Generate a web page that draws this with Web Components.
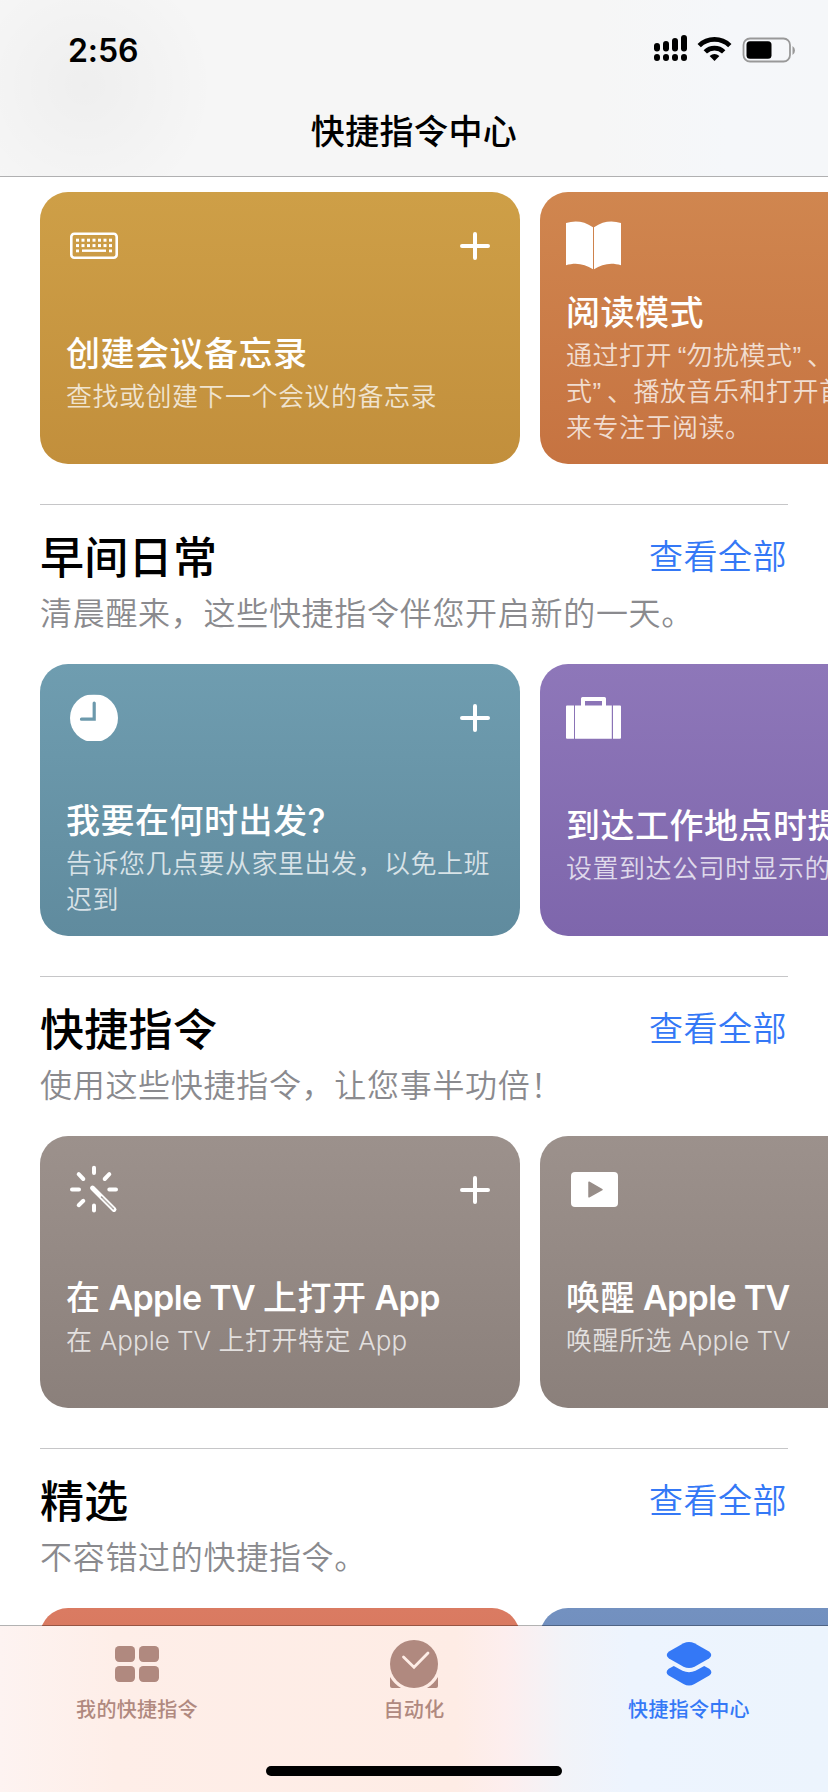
<!DOCTYPE html>
<html lang="zh-CN">
<head>
<meta charset="utf-8">
<title>快捷指令中心</title>
<style>
  html, body { margin: 0; height: 100%; }
  body { background: #fff; font-family: Inter, "Noto Sans CJK SC", sans-serif; overflow: hidden; }
  .lt { letter-spacing: -.65px; font-weight: 600; }
  .ld { letter-spacing: 0; }
  .q { display: inline-block; width: 14.5px; line-height: 1; letter-spacing: 0; font-family: "Liberation Sans", sans-serif; }
  .open { text-align: right; }
</style>
</head>
<body>
<shortcuts-app>
  <nav-header slot="header" time="2:56">快捷指令中心</nav-header>

  <card-strip>
    <shortcut-card icon="keyboard" add style="--from:#ce9f47;--to:#c28f3c;--bottom:49px">
      创建会议备忘录<span slot="desc">查找或创建下一个会议的备忘录</span>
    </shortcut-card>
    <shortcut-card icon="book" style="--from:#d0864f;--to:#c67341">
      阅读模式<span slot="desc">通过打开<span class="q open">“</span>勿扰模式<span class="q">”</span>、<br>式<span class="q">”</span>、播放音乐和打开首<br>来专注于阅读。</span>
    </shortcut-card>
  </card-strip>

  <gallery-section heading="早间日常" sub="清晨醒来，这些快捷指令伴您开启新的一天。">
    <shortcut-card icon="clock" add style="--from:#6f9db0;--to:#608b9e">
      我要在何时出发?<span slot="desc">告诉您几点要从家里出发，以免上班<br>迟到</span>
    </shortcut-card>
    <shortcut-card icon="suitcase" style="--from:#8e77b9;--to:#7e66ac;--bottom:49px">
      到达工作地点时提<span slot="desc">设置到达公司时显示的</span>
    </shortcut-card>
  </gallery-section>

  <gallery-section heading="快捷指令" sub="使用这些快捷指令，让您事半功倍！">
    <shortcut-card icon="wand" add style="--from:#9c918c;--to:#8b807b;--bottom:49px">
      在<span class="lt"> Apple TV </span>上打开<span class="lt"> App</span><span slot="desc">在<span class="ld"> Apple TV </span>上打开特定<span class="ld"> App</span></span>
    </shortcut-card>
    <shortcut-card icon="tv" style="--from:#9c918c;--to:#8b807b;--bottom:49px">
      唤醒<span class="lt"> Apple TV</span><span slot="desc">唤醒所选<span class="ld"> Apple TV</span></span>
    </shortcut-card>
  </gallery-section>

  <gallery-section heading="精选" sub="不容错过的快捷指令。">
    <shortcut-card style="--from:#da7b62;--to:#cf6a52"></shortcut-card>
    <shortcut-card style="--from:#7391c0;--to:#6481b2"></shortcut-card>
  </gallery-section>

  <tab-bar slot="tabs">
    <tab-item icon="grid">我的快捷指令</tab-item>
    <tab-item icon="automation">自动化</tab-item>
    <tab-item icon="gallery" active>快捷指令中心</tab-item>
  </tab-bar>
</shortcuts-app>

<script>
const keys = [0,1,2,3,4,5,6].map(i =>
  `<rect x="${10 + i * 5.5}" y="20.7" width="3" height="3"/><rect x="${10 + i * 5.5}" y="26.1" width="3" height="3"/>`).join('');
const ICONS = {
  keyboard: `<svg width="56" height="56" viewBox="0 0 56 56" fill="#fff"><rect x="5.3" y="15.8" width="45.4" height="24" rx="3" fill="none" stroke="#fff" stroke-width="2.6"/>${keys}<rect x="10" y="31.5" width="3" height="2.8"/><rect x="16" y="31.5" width="24" height="2.4"/><rect x="43" y="31.5" width="3" height="2.8"/></svg>`,
  book: `<svg width="56" height="56" viewBox="0 0 56 56" fill="#fff"><path d="M0 5C9 2.300 18 3 27 9.300V51.300C19 46 10 44 0 47.200Z"/><path d="M55 5C46 2.300 37 3 28 9.300V51.300C36 46 45 44 55 47.200Z"/></svg>`,
  clock: `<svg width="56" height="56" viewBox="0 0 56 56"><clipPath id="c"><rect y="4.800" width="56" height="46.200"/></clipPath><circle cx="28" cy="28" r="24" fill="#fff" clip-path="url(#c)"/><path d="M28.200 13V29.200H15.500" fill="none" stroke="#6c99ac" stroke-width="3.200" stroke-linecap="round"/></svg>`,
  suitcase: `<svg width="56" height="56" viewBox="0 0 56 56" fill="#fff"><path d="M1 15.500H8V48.800H1Q0 48.800 0 47.800V16.500Q0 15.500 1 15.500ZM47 15.500H54Q55 15.500 55 16.500V47.800Q55 48.800 54 48.800H47Z"/><path fill-rule="evenodd" d="M9 15.500H15V8.500Q15 7 16.500 7H38.500Q40 7 40 8.500V15.500H45.800V48.800H9ZM19 11V15.500H36V11Z"/></svg>`,
  wand: `<svg width="56" height="56" viewBox="0 0 56 56" fill="none" stroke="#fff" stroke-width="4" stroke-linecap="round"><path d="M28 5.800V11M28 43.500V48.500M6 27.500H13M43.300 27.500H50M12.700 12.200L17.300 17M43.300 12.200L38.700 17M12.700 43.200L17.300 38.800"/><path d="M26.500 26L48 47.500" stroke-width="4.900"/><path d="M35.500 35L47.300 46.800" stroke="#958b86" stroke-width="1.500"/><path d="M36.500 36L46.800 46.300" stroke-width=".6"/></svg>`,
  tv: `<svg width="56" height="56" viewBox="0 0 56 56"><rect x="5" y="10" width="47" height="35" rx="4" fill="#fff"/><path d="M23 20.200L36 27.600L23 34.800Z" fill="#978d88" stroke="#978d88" stroke-width="1.500" stroke-linejoin="round"/></svg>`,
  grid: `<svg width="48" height="48" viewBox="0 0 48 48" fill="currentColor"><rect x="2" y="6" width="20" height="16" rx="4.200"/><rect x="26" y="6" width="20" height="16" rx="4.200"/><rect x="2" y="26" width="20" height="16" rx="4.200"/><rect x="26" y="26" width="20" height="16" rx="4.200"/></svg>`,
  automation: `<svg width="48" height="48" viewBox="0 0 48 48" fill="currentColor"><circle cx="24" cy="24" r="24"/><path d="M13.500 17L24 27.300L38 13" fill="none" stroke="#feede6" stroke-width="2.800" stroke-linecap="round"/><path d="M0 37Q4 44 11 48H2Q0 48 0 46ZM48 37Q44 44 37 48H46Q48 48 48 46Z"/></svg>`,
  gallery: `<svg width="48" height="48" viewBox="0 0 48 48" fill="currentColor"><path d="M18.500 3.200Q24 .8 29.500 3.200L44 11.600Q48.500 15 44 18.400L29.500 26.700Q24 29.500 18.500 26.700L4 18.400Q-.5 15 4 11.600Z"/><path d="M8.800 25.900L17.500 30.700Q24 33.600 30.500 30.700L39.200 25.900L44.300 28.800Q48.500 32.200 44.300 35.600L29.500 44Q24 47 18.500 44L3.700 35.600Q-.5 32.200 3.700 28.800Z"/></svg>`
};
const define = (name, render) => customElements.define(name, class extends HTMLElement {
  constructor() { super(); this.attachShadow({ mode: 'open' }); }
  connectedCallback() { this.shadowRoot.innerHTML = render(this); }
});

define('shortcuts-app', () => `<style>
  :host { display: flex; flex-direction: column; width: 828px; height: 1792px; overflow: hidden; }
  main { flex: 1; min-height: 0; overflow: hidden; padding-top: 15px; }
</style><slot name="header"></slot><main><slot></slot></main><slot name="tabs"></slot>`);

define('status-bar', el => `<style>
  :host { display: flex; justify-content: space-between; align-items: center; height: 100px; padding: 0 33px 0 68px; box-sizing: border-box; }
  b { font-size: 32px; font-weight: 600; letter-spacing: -.1px; line-height: 40px; padding-top: 1px; }
  svg { margin-bottom: 2px; }
</style><b>${el.getAttribute('time')}</b>
<svg width="142" height="28" viewBox="0 0 142 28">
  <path d="M3 11.500V14M12 9.500V14M21 6.500V14M30 3.500V14M3 22.500V23.600M12 22.500V23.600M21 22.500V23.600M30 22.500V23.600" transform="translate(1 -.5)" stroke="#000" stroke-width="6" stroke-linecap="round"/>
  <g fill="none" stroke="#000" stroke-width="4.800"><path d="M46.200 10.600A22 22 0 0 1 76.800 10.600"/><path d="M52.300 16.900A13.200 13.200 0 0 1 70.700 16.900"/></g>
  <path d="M61.500 26L56.600 21.100Q61.500 17 66.400 21.100Z"/>
  <rect x="90.500" y="3.500" width="46.500" height="23" rx="6.500" fill="none" stroke="#999" stroke-width="1.800"/>
  <rect x="93.500" y="6.300" width="25" height="17.400" rx="3.500"/>
  <path d="M139.500 11Q142 12.500 142 15.500Q142 18.500 139.500 20Z" fill="#999"/>
</svg>`);

define('nav-header', el => `<style>
  :host { display: block; height: 177px; box-sizing: border-box; border-bottom: 1px solid #b0b0b1;
    background: radial-gradient(circle at 85px 85px, rgba(0,0,0,.03), rgba(0,0,0,0) 130px), linear-gradient(90deg, #f6f6f6 0 72%, #f5f7fa 88%, #f5f7f9); }
  h1 { margin: 0; height: 62px; line-height: 64px; text-align: center; font-size: 34px; font-weight: 500; letter-spacing: .4px; }
</style><status-bar time="${el.getAttribute('time')}"></status-bar><h1><slot></slot></h1>`);

define('card-strip', () => `<style>
  :host { display: flex; gap: 20px; padding-left: 40px; padding-bottom: 40px; overflow: hidden; }
</style><slot></slot>`);

define('gallery-section', el => `<style>
  :host { display: block; }
  header { margin: 0 40px; height: 160px; box-sizing: border-box; border-top: 1px solid #c6c6c8; padding-top: 26px; }
  .row { display: flex; justify-content: space-between; align-items: center; height: 52px; }
  h2 { margin: 0; font-size: 44px; line-height: 52px; font-weight: 500; letter-spacing: .3px; padding-top: 2px; }
  a { color: #3478f6; font-size: 34px; line-height: 48px; letter-spacing: .5px; margin-right: 1px; }
  p { margin: 11px 0 0; font-size: 32px; line-height: 40px; letter-spacing: .7px; color: #8a8a8e; white-space: nowrap; }
  a, p { font-weight: 350; }
</style><header><div class="row"><h2>${el.getAttribute('heading')}</h2><a>查看全部</a></div><p>${el.getAttribute('sub')}</p></header>
<card-strip><slot></slot></card-strip>`);

define('shortcut-card', el => `<style>
  :host { display: flex; flex-direction: column; justify-content: space-between; flex: none; width: 480px; height: 272px; box-sizing: border-box;
    padding: 26px 26px var(--bottom, 18px); border-radius: 28px; background: linear-gradient(var(--from), var(--to)); color: #fff; overflow: hidden; }
  .top { display: flex; justify-content: space-between; align-items: center; height: 56px; padding-right: 4px; }
  svg { display: block; }
  h3 { margin: 0; font-size: 34px; line-height: 46px; font-weight: 500; letter-spacing: .5px; white-space: nowrap; }
  p { margin: 2px 0 0; font-size: 26px; line-height: 36px; font-weight: 350; letter-spacing: .5px; white-space: nowrap; color: rgba(255,255,255,.75); }
</style><div class="top">${ICONS[el.getAttribute('icon')] || ''}${el.hasAttribute('add') ? '<svg width="30" height="28" viewBox="0 0 30 28" stroke="#fff" stroke-width="4" stroke-linecap="round"><path d="M15 2V26M2 14H28"/></svg>' : ''}</div>
<div><h3><slot></slot></h3><p><slot name="desc"></slot></p></div>`);

define('tab-bar', () => `<style>
  :host { display: flex; flex-direction: column; justify-content: space-between; height: 167px; box-sizing: border-box; margin-top: -1px; position: relative;
    border-top: 1px solid rgba(0,0,0,.3); background: linear-gradient(90deg, #fdf3f1, #feeee8 14%, #feece5 55%, #fdeeee 61%, #f2f3f8 68%, #edf4fe 76%, #ecf4fd) padding-box; }
  nav { display: grid; grid-template-columns: 274px 280px 270px; }
  i { display: block; width: 296px; height: 10px; border-radius: 5px; background: #000; margin: 0 auto 16px; }
</style><nav><slot></slot></nav><i></i>`);

define('tab-item', el => `<style>
  :host { display: flex; flex-direction: column; align-items: center; padding-top: 14px; color: ${el.hasAttribute('active') ? '#3478f6' : '#b0897f'};
    font-size: 20px; line-height: 28px; letter-spacing: .3px; font-weight: 500; }
  svg { display: block; margin-bottom: 8px; }
</style>${ICONS[el.getAttribute('icon')]}<span><slot></slot></span>`);
</script>
</body>
</html>
